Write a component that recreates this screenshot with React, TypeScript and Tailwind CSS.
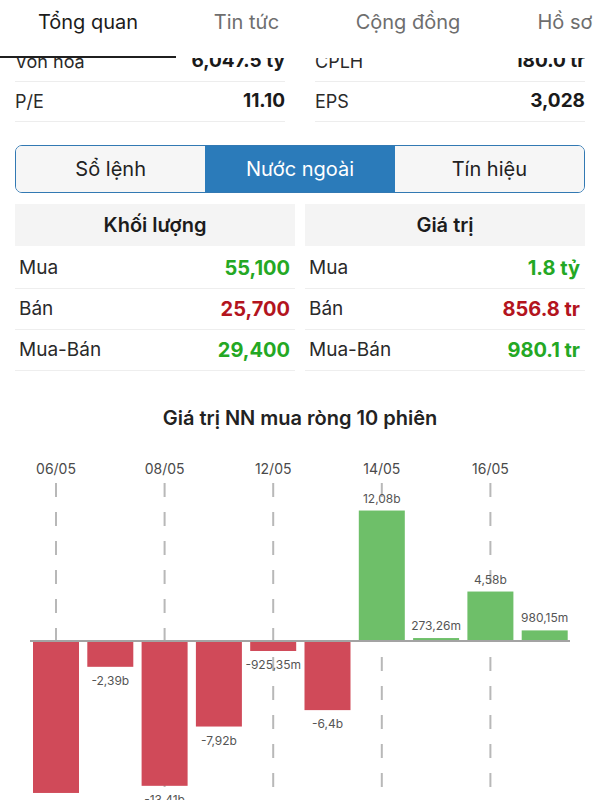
import * as React from "react"

const TABS = [
  { label: "Tổng quan", w: "w-[176px]", active: true },
  { label: "Tin tức", w: "w-[141px]", active: false },
  { label: "Cộng đồng", w: "w-[182px]", active: false },
  { label: "Hồ sơ", w: "w-[132px]", active: false },
]

const STATS = [
  ["Vốn hóa", "6,047.5 tỷ", "CPLH", "180.0 tr"],
  ["P/E", "11.10", "EPS", "3,028"],
]

const SEGMENTS = ["Sổ lệnh", "Nước ngoài", "Tín hiệu"]

const GREEN = "text-[#24a824]"
const RED = "text-[#b3141e]"

const VOLUME = [
  { label: "Mua", value: "55,100", color: GREEN },
  { label: "Bán", value: "25,700", color: RED },
  { label: "Mua-Bán", value: "29,400", color: GREEN },
]

const VALUE = [
  { label: "Mua", value: "1.8 tỷ", color: GREEN },
  { label: "Bán", value: "856.8 tr", color: RED },
  { label: "Mua-Bán", value: "980.1 tr", color: GREEN },
]

// net foreign buy value, in billions (first label sits below the fold)
const SESSIONS = [
  { v: -14.07, label: "" },
  { v: -2.39, label: "-2,39b" },
  { v: -13.41, label: "-13,41b" },
  { v: -7.92, label: "-7,92b" },
  { v: -0.925, label: "-925,35m" },
  { v: -6.4, label: "-6,4b" },
  { v: 12.08, label: "12,08b" },
  { v: 0.273, label: "273,26m" },
  { v: 4.58, label: "4,58b" },
  { v: 0.98, label: "980,15m" },
]

const DATES = [
  { i: 0, label: "06/05" },
  { i: 2, label: "08/05" },
  { i: 4, label: "12/05" },
  { i: 6, label: "14/05" },
  { i: 8, label: "16/05" },
]

function DataTable({ title, rows }: { title: string; rows: typeof VOLUME }) {
  return (
    <div>
      <div className="h-[42px] mb-[2px] bg-[#f4f4f4] flex items-center justify-center text-[20px] font-semibold text-[#1c1c1c]">
        {title}
      </div>
      {rows.map((r) => (
        <div
          key={r.label}
          className="h-[41px] flex items-center justify-between pl-[4px] pr-[5px] border-b border-[#eeeeee]"
        >
          <span className="text-[19px] text-[#2a2a2a]">{r.label}</span>
          <span className={`text-[20px] font-bold ${r.color}`}>{r.value}</span>
        </div>
      ))}
    </div>
  )
}

function NetBuyChart() {
  const zero = 201
  const scale = 10.8
  const cx = (i: number) => 56 + i * 54.3

  return (
    <svg width="600" height="370" viewBox="0 0 600 370" className="block">
      {DATES.map((d) => (
        <g key={d.label}>
          <text
            x={cx(d.i)}
            y={34}
            textAnchor="middle"
            fontSize="14"
            fill="#4a4a4a"
            fontFamily="Inter, sans-serif"
          >
            {d.label}
          </text>
          <line
            x1={cx(d.i)}
            x2={cx(d.i)}
            y1={43}
            y2={370}
            stroke="#b8b8b8"
            strokeWidth="2"
            strokeDasharray="14 15"
          />
        </g>
      ))}
      {SESSIONS.map((s, i) => {
        const h = Math.max(Math.abs(s.v) * scale, 2)
        const up = s.v >= 0
        const y = up ? zero - h : zero
        return (
          <g key={i}>
            <rect x={cx(i) - 23} y={y} width="46" height={h} fill={up ? "#6ebf69" : "#d04a59"} />
            {s.label && (
              <text
                x={cx(i)}
                y={up ? y - 8 : zero + h + 18}
                textAnchor="middle"
                fontSize="12"
                fill="#555"
                fontFamily="Inter, sans-serif"
              >
                {s.label}
              </text>
            )}
          </g>
        )
      })}
      <line x1="30" x2="570" y1={zero} y2={zero} stroke="#a3a3a3" strokeWidth="2" />
    </svg>
  )
}

export default function App() {
  return (
    <div className="w-[600px] h-[800px] overflow-hidden bg-white font-['Inter',sans-serif]">
      {/* Top tabs */}
      <div className="relative z-10 h-[58px] bg-white flex">
        {TABS.map((t) => (
          <div
            key={t.label}
            className={`${t.w} shrink-0 h-[58px] pt-[8px] text-center text-[20px] leading-[28px] border-b-2 ${
              t.active ? "border-[#1f1f1f] text-[#1c1c1c]" : "border-transparent text-[#6e6e6e]"
            }`}
          >
            {t.label}
          </div>
        ))}
      </div>

      <div className="-mt-[16px]">
        {/* Overview stats */}
        <div className="px-[15px] grid grid-cols-2 gap-x-[30px]">
          {STATS.map((row) => (
            <React.Fragment key={row[0]}>
              <div className="h-[40px] flex items-center justify-between border-b border-[#ededed]">
                <span className="text-[18px] text-[#2a2a2a]">{row[0]}</span>
                <span className="text-[19px] font-bold text-[#1a1a1a]">{row[1]}</span>
              </div>
              <div className="h-[40px] flex items-center justify-between border-b border-[#ededed]">
                <span className="text-[18px] text-[#2a2a2a]">{row[2]}</span>
                <span className="text-[19px] font-bold text-[#1a1a1a]">{row[3]}</span>
              </div>
            </React.Fragment>
          ))}
        </div>

        {/* Segmented control */}
        <div className="mx-[15px] mt-[23px] h-[48px] flex rounded-[7px] border-[1.5px] border-[#3279b3] overflow-hidden">
          {SEGMENTS.map((s, i) => (
            <div
              key={s}
              className={`flex-1 flex items-center justify-center text-[20px] ${
                i === 1 ? "bg-[#2b7bba] text-white" : "bg-[#f6f6f6] text-[#222]"
              }`}
            >
              {s}
            </div>
          ))}
        </div>

        {/* Foreign trading tables */}
        <div className="mt-[11px] px-[15px] grid grid-cols-2 gap-x-[10px]">
          <DataTable title="Khối lượng" rows={VOLUME} />
          <DataTable title="Giá trị" rows={VALUE} />
        </div>

        {/* Chart */}
        <div className="mt-[33px] h-[28px] leading-[28px] text-center text-[20px] font-semibold text-[#222]">
          Giá trị NN mua ròng 10 phiên
        </div>
        <div className="mt-[8px]">
          <NetBuyChart />
        </div>
      </div>
    </div>
  )
}
